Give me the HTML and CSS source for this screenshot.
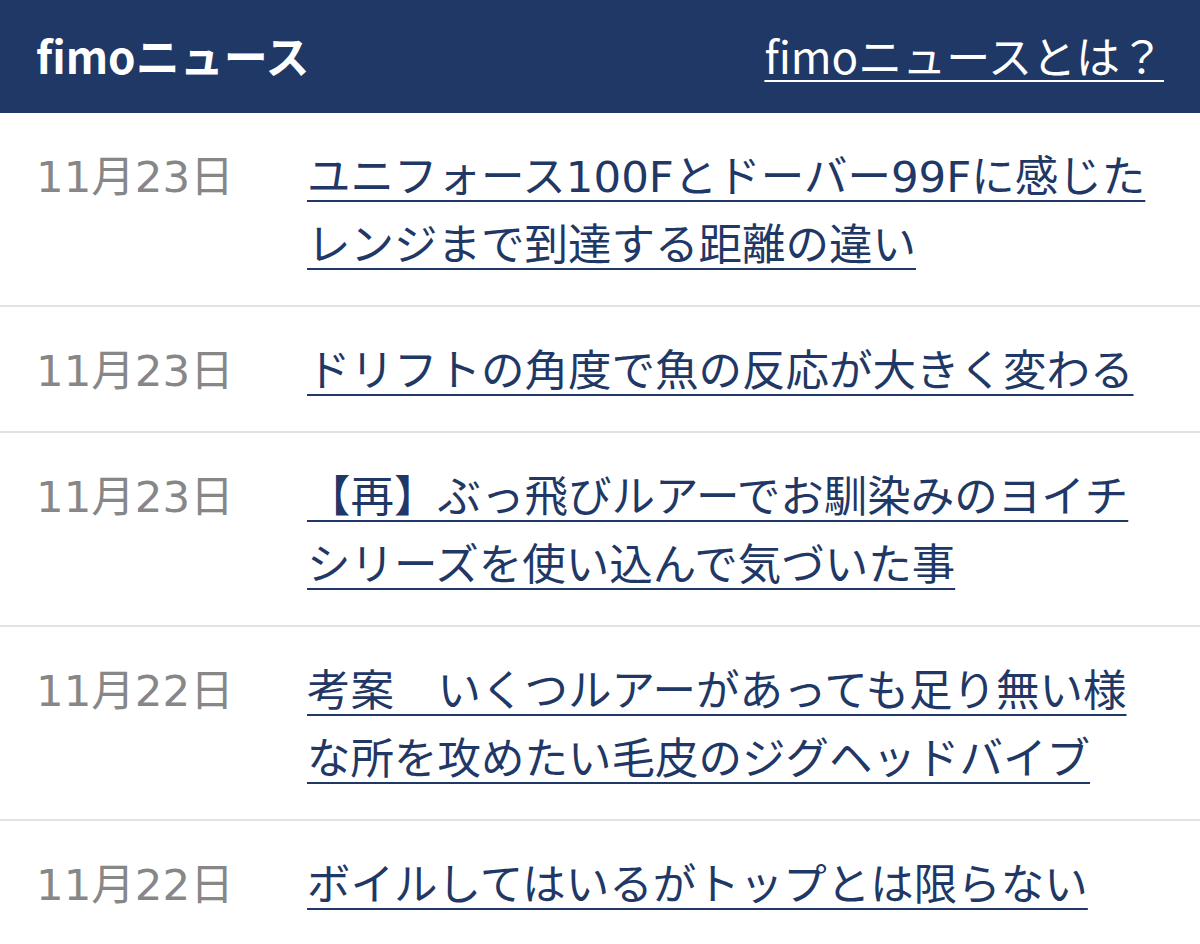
FILE: index.html
```html
<!DOCTYPE html>
<html lang="ja">
<head>
    <meta charset="UTF-8">
    <meta name="viewport" content="width=device-width, initial-scale=1.0">
    <title>fimoニュース</title>
    <link rel="stylesheet" href="styles.css">
</head>
<body>
    <header class="header">
        <h1 class="header-title">fimoニュース</h1>
        <a class="header-link" href="#">fimoニュースとは？</a>
    </header>
    <ul class="news-list">
        <li class="news-item">
            <span class="news-date">11月23日</span>
            <a class="news-link" href="#">ユニフォース100Fとドーバー99Fに感じたレンジまで到達する距離の違い</a>
        </li>
        <li class="news-item">
            <span class="news-date">11月23日</span>
            <a class="news-link" href="#">ドリフトの角度で魚の反応が大きく変わる</a>
        </li>
        <li class="news-item">
            <span class="news-date">11月23日</span>
            <a class="news-link" href="#">【再】ぶっ飛びルアーでお馴染みのヨイチシリーズを使い込んで気づいた事</a>
        </li>
        <li class="news-item">
            <span class="news-date">11月22日</span>
            <a class="news-link" href="#">考案　いくつルアーがあっても足り無い様な所を攻めたい毛皮のジグヘッドバイブ</a>
        </li>
        <li class="news-item">
            <span class="news-date">11月22日</span>
            <a class="news-link" href="#">ボイルしてはいるがトップとは限らない</a>
        </li>
    </ul>
</body>
</html>
```

FILE: styles.css
```css
body {
    margin: 0;
    padding: 0;
    background-color: #fff;
    font-family: "Noto Sans CJK JP", "Noto Sans", sans-serif;
}
.header {
    display: flex;
    align-items: center;
    justify-content: space-between;
    height: 113px;
    padding: 0 36px;
    background-color: #1f3866;
    color: #fff;
}
.header-title {
    margin: 0 0 4px 0;
    font-size: 44px;
    font-weight: bold;
    line-height: 1;
}
.header-link {
    margin-bottom: 4px;
    color: #fff;
    font-size: 44px;
    line-height: 1;
    text-decoration: underline;
    text-decoration-thickness: 2px;
    text-underline-offset: 6px;
}
.news-list {
    list-style: none;
    margin: 0;
    padding: 0;
}
.news-item {
    display: grid;
    grid-template-columns: 271px 1fr;
    padding: 30px 36px 26px 36px;
    border-bottom: 2px solid #e2e2e2;
    font-family: "DejaVu Sans", "Noto Sans CJK JP", sans-serif;
    font-size: 43.5px;
    line-height: 68px;
}
.news-date {
    color: #878787;
}
.news-link {
    color: #1f3866;
    text-decoration: underline;
    text-decoration-thickness: 2px;
    text-underline-offset: 8px;
}
```
